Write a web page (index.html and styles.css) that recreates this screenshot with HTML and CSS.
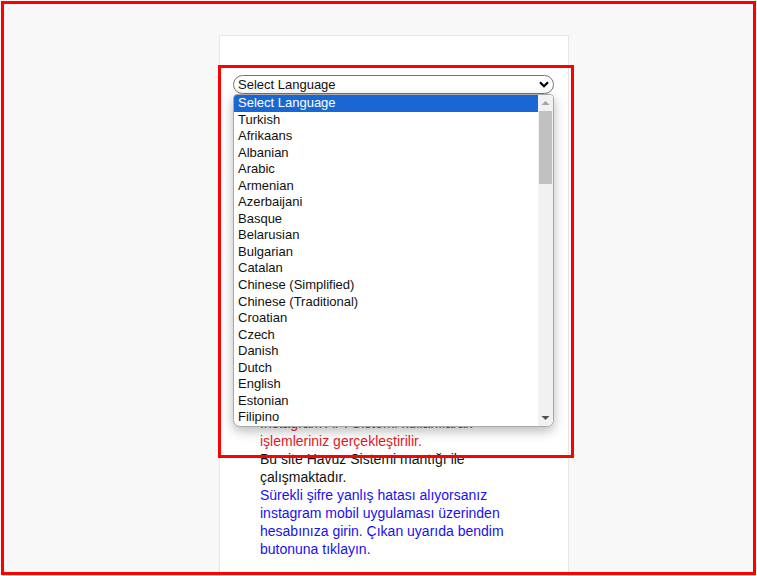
FILE: index.html
```html
<!DOCTYPE html>
<html>
  <head>
    <meta charset="utf-8">
    <title>Instagram Takipçi</title>
    <link rel="stylesheet" href="styles.css">
  </head>
  <body>
    <div class="card">
      <div class="lang">
        <div class="select">
          <span>Select Language</span>
          <svg class="chev" width="10" height="7" viewBox="0 0 10 7"><path d="M1 1.2 L5 5.2 L9 1.2" fill="none" stroke="#000" stroke-width="2.2"/></svg>
        </div>

        <div class="listbox">
          <div class="options">
            <div class="opt selected">Select Language</div>
            <div class="opt">Turkish</div>
            <div class="opt">Afrikaans</div>
            <div class="opt">Albanian</div>
            <div class="opt">Arabic</div>
            <div class="opt">Armenian</div>
            <div class="opt">Azerbaijani</div>
            <div class="opt">Basque</div>
            <div class="opt">Belarusian</div>
            <div class="opt">Bulgarian</div>
            <div class="opt">Catalan</div>
            <div class="opt">Chinese (Simplified)</div>
            <div class="opt">Chinese (Traditional)</div>
            <div class="opt">Croatian</div>
            <div class="opt">Czech</div>
            <div class="opt">Danish</div>
            <div class="opt">Dutch</div>
            <div class="opt">English</div>
            <div class="opt">Estonian</div>
            <div class="opt">Filipino</div>
            <div class="opt">Finnish</div>
          </div>
          <div class="scrollbar">
            <svg class="arrow" width="15" height="16" viewBox="0 0 15 16"><path d="M3.5 10 L7.5 6 L11.5 10 Z" fill="#a3a3a3"/></svg>
            <div class="thumb"></div>
            <div class="track"></div>
            <svg class="arrow" width="15" height="16" viewBox="0 0 15 16"><path d="M3.5 6 L7.5 10 L11.5 6 Z" fill="#505050"/></svg>
          </div>
        </div>
      </div>

      <div class="hidden-part">
        <p class="stats"><span class="blue">(</span><span class="pink">)</span></p>
      </div>

      <div class="info">
        <span class="red">Instagram API Sistemi kullanılarak işlemleriniz gerçekleştirilir.</span><br>
        Bu site Havuz Sistemi mantığı ile çalışmaktadır.<br>
        <span class="blue">Sürekli şifre yanlış hatası alıyorsanız instagram mobil uygulaması üzerinden hesabınıza girin. Çıkan uyarıda bendim butonuna tıklayın.</span>
      </div>
    </div>

    <!-- annotation boxes -->
    <div class="mark"></div>
    <div class="frame"></div>
  </body>
</html>
```

FILE: styles.css
```css
html {
  background-color: #f8f8f8;
}

body {
  margin: 0;
  height: 576px;
  overflow: hidden;
  font-family: "Liberation Sans", Arial, sans-serif;
  color: #111;
}

.card {
  box-sizing: border-box;
  width: 350px;
  min-height: 560px;
  margin: 35px 0 0 219px;
  padding: 39px 14px 0 13px;
  background-color: #fff;
  border: 1px solid #e6e6e6;
}

.lang {
  position: relative;
}

.select {
  box-sizing: border-box;
  height: 19px;
  display: flex;
  align-items: center;
  justify-content: space-between;
  padding: 0 4px 0 4px;
  border: 1px solid #767676;
  border-radius: 10px;
  font-size: 13px;
  background-color: #fff;
}

.chev {
  margin-right: 0;
}

.listbox {
  position: absolute;
  top: 19px;
  left: 0;
  right: 0;
  height: 333px;
  box-sizing: border-box;
  display: flex;
  background-color: #fff;
  border: 1px solid #a9a9a9;
  border-radius: 4px 4px 7px 7px;
  box-shadow: 0 4px 12px rgba(0, 0, 0, 0.28);
  overflow: hidden;
  z-index: 5;
}

.options {
  flex: 1;
  font-size: 13px;
}

.opt {
  height: 16.55px;
  line-height: 16.55px;
  padding-left: 4px;
  white-space: nowrap;
}

.selected {
  background-color: #1967d2;
  color: #fff;
}

.scrollbar {
  width: 15px;
  display: flex;
  flex-direction: column;
  background-color: #f1f1f1;
}

.arrow {
  display: block;
  flex: none;
}

.thumb {
  height: 73px;
  margin: 0 1px;
  background-color: #c1c1c1;
}

.track {
  flex: 1;
}

.hidden-part {
  height: 320px;
  padding-top: 80px;
  box-sizing: border-box;
}

.stats {
  margin: 0;
  display: flex;
  justify-content: space-between;
  font-size: 14px;
}

.pink {
  color: #e0308a;
}

.info {
  padding: 0 26px;
  font-size: 14px;
  line-height: 18px;
  margin-left: 1px;
}

.red {
  color: #e4171f;
}

.blue {
  color: #1a10f0;
}

.mark {
  position: absolute;
  left: 218px;
  top: 65px;
  width: 356px;
  height: 393px;
  box-sizing: border-box;
  border: 3px solid #ff0000;
  z-index: 10;
}

.frame {
  position: absolute;
  left: 1px;
  top: 1px;
  width: 755px;
  height: 574px;
  box-sizing: border-box;
  border: 3px solid #ff0000;
  z-index: 10;
}
```
